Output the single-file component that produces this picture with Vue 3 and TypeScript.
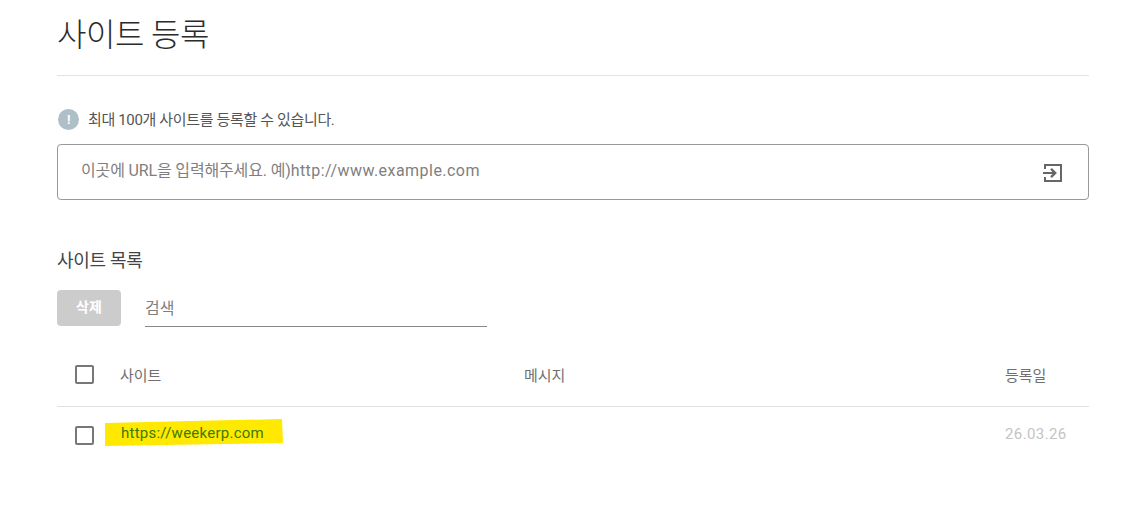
<script setup lang="ts">
const title = '사이트 등록'
</script>

<template>
  <main class="page">
    <h1 class="title">{{ title }}</h1>
    <div class="notice">
      <span class="notice-icon">!</span>
      <span class="notice-text">최대 100개 사이트를 등록할 수 있습니다.</span>
    </div>
    <div class="url-box">
      <span class="url-placeholder">이곳에 URL을 입력해주세요. 예)<span class="latin">http://www.example.com</span></span>
      <svg class="enter" width="20" height="20" viewBox="0 0 20 20" fill="none" stroke="#666" stroke-width="2">
        <path d="M2 6V2h16v16H2v-4" />
        <path d="M0 10h12" />
        <path d="M8 5.8 12.2 10 8 14.2" stroke-width="2.4" />
      </svg>
    </div>
    <h2 class="subtitle">사이트 목록</h2>
    <div class="tools">
      <button class="delete" type="button"><span class="delete-label">삭제</span></button>
      <div class="search">검색</div>
    </div>
    <div class="row head">
      <span class="check"></span>
      <span class="col-site">사이트</span>
      <span class="col-msg">메시지</span>
      <span class="col-date">등록일</span>
    </div>
    <div class="row body">
      <span class="check"></span>
      <span class="col-site link">
        <svg class="marker" width="180" height="28" viewBox="0 0 180 28"><polygon points="1,4 178,0 179,24 1,27" fill="#ffe900" /></svg>
        <span class="link-text">https://weekerp.com</span>
      </span>
      <span class="col-msg"></span>
      <span class="col-date muted">26.03.26</span>
    </div>
  </main>
</template>

<style>
html, body { margin: 0; background: #fff; }
</style>

<style scoped>
.page {
  box-sizing: border-box;
  width: 1130px;
  height: 522px;
  padding: 0 41px 0 57px;
  overflow: hidden;
  font-family: Roboto, "Noto Sans CJK KR", sans-serif;
  color: #333;
}
.title {
  box-sizing: border-box;
  height: 76px;
  margin: 0;
  padding-top: 12px;
  line-height: 46px;
  font-size: 32px;
  font-weight: 300;
  letter-spacing: -0.5px;
  color: #2b2b2b;
  border-bottom: 1px solid #e2e2e2;
}
.notice {
  display: flex;
  align-items: center;
  gap: 9px;
  height: 22px;
  margin-top: 32px;
  padding-left: 1px;
  font-size: 15px;
  letter-spacing: -0.35px;
  color: #555;
}
.notice-text { position: relative; top: -1px; }
.notice-icon {
  width: 21px;
  height: 21px;
  border-radius: 50%;
  background: #aebfc8;
  color: #fff;
  font-size: 13px;
  font-weight: 700;
  line-height: 21px;
  text-align: center;
}
.url-box {
  display: flex;
  align-items: center;
  justify-content: space-between;
  box-sizing: border-box;
  height: 56px;
  margin-top: 14px;
  padding: 0 26px 0 23px;
  border: 1px solid #999;
  border-radius: 4px;
}
.url-placeholder {
  position: relative;
  top: -3px;
  font-size: 16px;
  letter-spacing: -0.15px;
  color: #808080;
}
.latin { letter-spacing: 0.46px; }
.enter { display: block; position: relative; top: 1px; left: 1px; }
.subtitle {
  margin: 47px 0 0;
  font-size: 18px;
  font-weight: 400;
  line-height: 28px;
  letter-spacing: -0.3px;
  color: #444;
}
.tools {
  display: flex;
  gap: 24px;
  margin-top: 15px;
}
.delete {
  width: 64px;
  height: 36px;
  padding: 0;
  border: 0;
  border-radius: 4px;
  background: #ccc;
  color: #fff;
  font-family: inherit;
  font-size: 14px;
  font-weight: 700;
}
.delete-label { position: relative; top: -2px; }
.search {
  box-sizing: border-box;
  width: 342px;
  height: 37px;
  line-height: 37px;
  font-size: 16px;
  color: #808080;
  border-bottom: 1px solid #888;
}
.row {
  display: flex;
  align-items: center;
  padding-left: 18px;
  font-size: 15px;
}
.head {
  box-sizing: border-box;
  height: 80px;
  padding-top: 15px;
  color: #707070;
  border-bottom: 1px solid #e2e2e2;
}
.body { height: 56px; }
.check {
  flex: none;
  box-sizing: border-box;
  width: 19px;
  height: 19px;
  border: 2px solid #777;
  border-radius: 2px;
}
.col-site { position: relative; width: 404px; margin-left: 26px; }
.col-msg { flex: 1; }
.col-date { width: 84px; }
.muted { color: #c4c4c4; letter-spacing: 0.4px; position: relative; top: -1px; }
.link { color: #3c7a00; top: -2px; letter-spacing: 0.25px; }
.link-text { position: relative; left: 1px; }
.marker { position: absolute; left: -16px; top: -5px; }
</style>
